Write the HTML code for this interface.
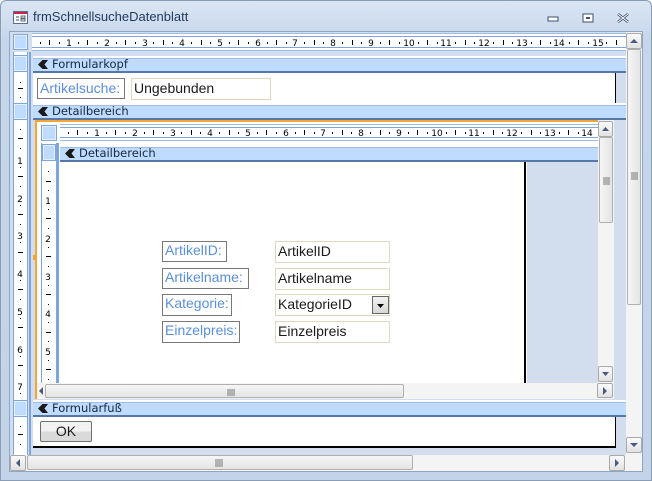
<!DOCTYPE html>
<html><head><meta charset="utf-8"><style>
*{margin:0;padding:0;box-sizing:border-box}
body{width:652px;height:481px;overflow:hidden;background:#fff;font-family:"Liberation Sans","DejaVu Sans",sans-serif;position:relative}
div,span{position:absolute}
.frame{left:0;top:0;width:652px;height:481px;background:linear-gradient(#dbe6f4,#c5d6ea 40px,#c3d4e8);border:1px solid #8a9db5;border-radius:6px 6px 0 0}
.title{left:33px;top:9px;color:#1e395b;font-family:"Liberation Sans",sans-serif;font-size:13px}
.client{left:9px;top:31px;width:634px;height:441px;background:#d2deed;border:1px solid #8fa5c0}
.ruler{background:#fff;border-top:1px solid #9dbce6;border-bottom:1px solid #9dbce6;box-shadow:inset 0 2px 0 #fff,inset 0 3px 0 #7ea6dc,inset 0 -2px 0 #fff,inset 0 -3px 0 #7ea6dc}
.vr{background:#fff;border-left:1px solid #7ea6dc;border-right:1px solid #7ea6dc}
.box{background:#bfdbff;border:1px solid #7ea6dc;box-shadow:inset 0 0 0 1px #e4f0ff}
.bar{background:#bfdbff;border-top:2px solid #fff;border-bottom:2px solid #5777a6;font-size:11.5px;font-family:"DejaVu Sans",sans-serif;color:#15283f;padding-left:19px;line-height:13px;box-shadow:inset 0 1px 0 #9dbce6}
.bar:before{content:"";position:absolute;left:5px;top:2px;width:10px;height:9px;background:#1a1a1a;clip-path:polygon(0 50%,45% 0,100% 0,65% 50%,100% 100%,45% 100%)}
.lbl{border:1px solid #777;color:#5b8fd8;font-size:14px;padding-left:2px;line-height:17px;background:#fff}
.tb{border:1px solid #ddd8c0;color:#1a1a1a;font-size:14px;padding-left:2px;line-height:19px;background:#fff}
.sb{background:#f4f4f4}
.arr{background:linear-gradient(#fafafa,#e2e2e2);border:1px solid #a9a9a9;border-radius:2px}
.thumb{background:linear-gradient(90deg,#f6f6f6,#e4e4e4);border:1px solid #b0b0b0;border-radius:2px}
.hthumb{background:linear-gradient(#f6f6f6,#e4e4e4);border:1px solid #b0b0b0;border-radius:2px}
</style></head><body>
<div class="frame"></div>
<svg style="position:absolute;left:13px;top:11px" width="15" height="13"><rect x="0.5" y="0.5" width="14" height="12" fill="#fff" stroke="#5a6f8f"/><rect x="1" y="1" width="13" height="2" fill="#c24"/><line x1="3" y1="6" x2="6" y2="6" stroke="#345"/><line x1="3" y1="9" x2="6" y2="9" stroke="#345"/><rect x="8" y="5" width="4" height="2" fill="none" stroke="#345" stroke-width=".8"/><rect x="8" y="8" width="4" height="2" fill="none" stroke="#345" stroke-width=".8"/></svg>
<span class="title">frmSchnellsucheDatenblatt</span>
<svg style="position:absolute;left:545px;top:12px" width="90" height="12"><rect x="3" y="5" width="10" height="4" fill="#fff" stroke="#3b4f6b"/><rect x="38" y="2" width="10" height="8" fill="#fff" stroke="#3b4f6b"/><rect x="41" y="5" width="4" height="2" fill="#3b4f6b"/><path d="M73 2l10 8M83 2l-10 8" stroke="#3b4f6b" stroke-width="2.5"/><path d="M73 2l10 8M83 2l-10 8" stroke="#fff" stroke-width="1"/></svg>
<div class="client"></div>
<div class="box" style="left:13px;top:34px;width:15px;height:16px"></div>
<div class="ruler" style="left:32px;top:33px;width:594px;height:18px"></div>
<svg style="position:absolute;left:32px;top:33px" width="594" height="18">
<g fill="#000">
<path d="M8 9h1v2h-1zM17 7h1v5h-1zM27 9h1v2h-1zM46 9h1v2h-1zM55 7h1v5h-1zM65 9h1v2h-1zM84 9h1v2h-1zM93 7h1v5h-1zM103 9h1v2h-1zM121 9h1v2h-1zM131 7h1v5h-1zM140 9h1v2h-1zM159 9h1v2h-1zM169 7h1v5h-1zM178 9h1v2h-1zM197 9h1v2h-1zM206 7h1v5h-1zM216 9h1v2h-1zM235 9h1v2h-1zM244 7h1v5h-1zM254 9h1v2h-1zM272 9h1v2h-1zM282 7h1v5h-1zM291 9h1v2h-1zM310 9h1v2h-1zM320 7h1v5h-1zM329 9h1v2h-1zM348 9h1v2h-1zM357 7h1v5h-1zM367 9h1v2h-1zM386 9h1v2h-1zM395 7h1v5h-1zM405 9h1v2h-1zM423 9h1v2h-1zM433 7h1v5h-1zM442 9h1v2h-1zM461 9h1v2h-1zM471 7h1v5h-1zM480 9h1v2h-1zM499 9h1v2h-1zM508 7h1v5h-1zM518 9h1v2h-1zM537 9h1v2h-1zM546 7h1v5h-1zM556 9h1v2h-1zM574 9h1v2h-1zM584 7h1v5h-1z"/>
</g>
<g font-size="9" font-family="DejaVu Sans" text-anchor="middle">
<text x="37" y="13">1</text><text x="75" y="13">2</text><text x="113" y="13">3</text><text x="150" y="13">4</text><text x="188" y="13">5</text><text x="226" y="13">6</text><text x="263" y="13">7</text><text x="301" y="13">8</text><text x="339" y="13">9</text><text x="377" y="13">10</text><text x="414" y="13">11</text><text x="452" y="13">12</text><text x="490" y="13">13</text><text x="527" y="13">14</text><text x="566" y="13">15</text>
</g></svg>
<div class="vr" style="left:13px;top:52px;width:15px;height:403px;background:#fff"></div>
<div style="left:29px;top:52px;width:2px;height:403px;background:#7ea6dc"></div>
<div class="box" style="left:13px;top:55px;width:15px;height:17px"></div>
<div class="box" style="left:13px;top:103px;width:15px;height:17px"></div>
<div class="box" style="left:13px;top:400px;width:15px;height:17px"></div>
<svg style="position:absolute;left:13px;top:52px" width="15" height="403">
<g fill="#000"><path d="M7 30h1v1h-1zM5 36h5v1h-5zM7 45h1v1h-1z"/>
<path d="M7 77h1v1h-1zM5 86h5v1h-5zM7 96h1v1h-1zM7 115h1v1h-1zM5 124h5v1h-5zM7 134h1v1h-1zM7 153h1v1h-1zM5 162h5v1h-5zM7 172h1v1h-1zM7 190h1v1h-1zM5 200h5v1h-5zM7 209h1v1h-1zM7 228h1v1h-1zM5 237h5v1h-5zM7 247h1v1h-1zM7 266h1v1h-1zM5 275h5v1h-5zM7 285h1v1h-1zM7 304h1v1h-1zM5 313h5v1h-5zM7 323h1v1h-1zM7 341h1v1h-1z"/>
<path d="M7 374h1v1h-1zM5 382h5v1h-5zM7 392h1v1h-1z"/></g>
<g font-size="9" font-family="DejaVu Sans" text-anchor="middle"><text x="7" y="112">1</text><text x="7" y="150">2</text><text x="7" y="187">3</text><text x="7" y="225">4</text><text x="7" y="263">5</text><text x="7" y="301">6</text><text x="7" y="338">7</text></g></svg>
<div class="bar" style="left:33px;top:56px;width:593px;height:17px">Formularkopf</div>
<div style="left:33px;top:73px;width:583px;height:30px;background:#fff;border-right:1px solid #000"></div>
<div class="lbl" style="left:37px;top:78px;width:88px;height:21px;line-height:19px">Artikelsuche:</div>
<div class="tb" style="left:131px;top:78px;width:140px;height:22px">Ungebunden</div>
<div class="bar" style="left:33px;top:103px;width:593px;height:17px">Detailbereich</div>
<div style="left:33px;top:120px;width:593px;height:280px;background:#d2deed"></div>
<div style="left:35px;top:120px;width:2px;height:279px;background:#f7a530"></div>
<div style="left:33px;top:255px;width:3px;height:5px;background:#f7a530"></div>
<div style="left:35px;top:120px;width:578px;height:2px;background:#f7a530"></div>
<div style="left:37px;top:122px;width:561px;height:262px;background:#fff"></div>
<div class="box" style="left:41px;top:125px;width:16px;height:16px"></div>
<div class="ruler" style="left:60px;top:124px;width:538px;height:17px"></div>
<svg style="position:absolute;left:60px;top:124px" width="538" height="17">
<g fill="#000"><path d="M8 8h1v2h-1zM17 6h1v5h-1zM27 8h1v2h-1zM46 8h1v2h-1zM55 6h1v5h-1zM65 8h1v2h-1zM84 8h1v2h-1zM93 6h1v5h-1zM103 8h1v2h-1zM121 8h1v2h-1zM131 6h1v5h-1zM140 8h1v2h-1zM159 8h1v2h-1zM169 6h1v5h-1zM178 8h1v2h-1zM197 8h1v2h-1zM206 6h1v5h-1zM216 8h1v2h-1zM235 8h1v2h-1zM244 6h1v5h-1zM254 8h1v2h-1zM272 8h1v2h-1zM282 6h1v5h-1zM291 8h1v2h-1zM310 8h1v2h-1zM320 6h1v5h-1zM329 8h1v2h-1zM348 8h1v2h-1zM357 6h1v5h-1zM367 8h1v2h-1zM386 8h1v2h-1zM395 6h1v5h-1zM405 8h1v2h-1zM423 8h1v2h-1zM433 6h1v5h-1zM442 8h1v2h-1zM461 8h1v2h-1zM471 6h1v5h-1zM480 8h1v2h-1zM499 8h1v2h-1zM508 6h1v5h-1zM518 8h1v2h-1z"/></g>
<g font-size="9" font-family="DejaVu Sans" text-anchor="middle"><text x="37" y="12">1</text><text x="75" y="12">2</text><text x="113" y="12">3</text><text x="150" y="12">4</text><text x="188" y="12">5</text><text x="226" y="12">6</text><text x="263" y="12">7</text><text x="301" y="12">8</text><text x="339" y="12">9</text><text x="377" y="12">10</text><text x="414" y="12">11</text><text x="452" y="12">12</text><text x="490" y="12">13</text><text x="527" y="12">14</text></g></svg>
<div class="vr" style="left:41px;top:143px;width:16px;height:240px"></div>
<div style="left:57px;top:143px;width:2px;height:240px;background:#7ea6dc"></div>
<div class="box" style="left:42px;top:144px;width:14px;height:17px"></div>
<svg style="position:absolute;left:41px;top:162px" width="16" height="221">
<g fill="#000"><path d="M7 9h1v1h-1zM5 19h5v1h-5zM7 28h1v1h-1zM7 47h1v1h-1zM5 56h5v1h-5zM7 66h1v1h-1zM7 85h1v1h-1zM5 94h5v1h-5zM7 104h1v1h-1zM7 123h1v1h-1zM5 132h5v1h-5zM7 142h1v1h-1zM7 160h1v1h-1zM5 170h5v1h-5zM7 179h1v1h-1zM7 198h1v1h-1zM5 207h5v1h-5zM7 217h1v1h-1z"/></g>
<g font-size="9" font-family="DejaVu Sans" text-anchor="middle"><text x="7" y="42">1</text><text x="7" y="80">2</text><text x="7" y="118">3</text><text x="7" y="155">4</text><text x="7" y="193">5</text></g></svg>
<div class="bar" style="left:60px;top:145px;width:538px;height:17px">Detailbereich</div>
<div style="left:60px;top:162px;width:466px;height:221px;background:#fff;border-right:2px solid #000"></div>
<div style="left:527px;top:162px;width:71px;height:221px;background:#d2deed"></div>
<div class="lbl" style="left:162px;top:241px;width:65px;height:21px">ArtikelID:</div>
<div class="tb" style="left:275px;top:241px;width:115px;height:22px">ArtikelID</div>
<div class="lbl" style="left:162px;top:268px;width:87px;height:21px">Artikelname:</div>
<div class="tb" style="left:275px;top:268px;width:115px;height:22px">Artikelname</div>
<div class="lbl" style="left:162px;top:294px;width:70px;height:22px">Kategorie:</div>
<div class="tb" style="left:275px;top:294px;width:115px;height:22px">KategorieID</div>
<div style="left:372px;top:296px;width:17px;height:18px;border:1px solid #666;background:linear-gradient(#f2f2f2,#d8d8d8)"><svg width="15" height="16"><path d="M4 7h7l-3.5 4z" fill="#000"/></svg></div>
<div class="lbl" style="left:162px;top:321px;width:78px;height:22px">Einzelpreis:</div>
<div class="tb" style="left:275px;top:321px;width:115px;height:22px">Einzelpreis</div>
<div class="sb" style="left:598px;top:120px;width:16px;height:263px"></div>
<div class="arr" style="left:598px;top:121px;width:15px;height:16px"><svg width="13" height="14"><path d="M3 9h7l-3.5-4z" fill="#4a5a80"/></svg></div>
<div class="thumb" style="left:599px;top:137px;width:14px;height:86px"><svg width="12" height="84"><path d="M3 40h7M3 42h7M3 44h7M3 46h7" stroke="#777"/></svg></div>
<div class="arr" style="left:598px;top:366px;width:15px;height:16px"><svg width="13" height="14"><path d="M3 5h7l-3.5 4z" fill="#4a5a80"/></svg></div>
<div class="sb" style="left:37px;top:383px;width:577px;height:16px"></div>
<div style="left:37px;top:384px;width:8px;height:14px"><svg width="8" height="14"><path d="M6 3v8l-4-4z" fill="#4a5a80"/></svg></div>
<div class="hthumb" style="left:45px;top:384px;width:359px;height:14px"><svg width="357" height="12"><path d="M182 3v7M184 3v7M186 3v7M188 3v7" stroke="#777"/></svg></div>
<div class="arr" style="left:597px;top:383px;width:16px;height:15px"><svg width="14" height="13"><path d="M5 3v8l4-4z" fill="#4a5a80"/></svg></div>
<div class="bar" style="left:33px;top:400px;width:593px;height:17px">Formularfuß</div>
<div style="left:33px;top:417px;width:583px;height:31px;background:#fff;border-right:1px solid #000;border-bottom:2px solid #000"></div>
<div style="left:40px;top:421px;width:52px;height:21px;border:1px solid #707070;border-radius:2px;background:linear-gradient(#f2f2f2 50%,#dadada 51%);font-size:14px;text-align:center;line-height:19px;color:#1a1a1a">OK</div>
<div class="sb" style="left:626px;top:32px;width:16px;height:423px"></div>
<div class="arr" style="left:626px;top:33px;width:16px;height:16px"><svg width="14" height="14"><path d="M3 9h8l-4-4z" fill="#4a5a80"/></svg></div>
<div class="thumb" style="left:627px;top:49px;width:14px;height:256px"><svg width="12" height="254"><path d="M3 123h7M3 125h7M3 127h7M3 129h7" stroke="#777"/></svg></div>
<div class="arr" style="left:626px;top:437px;width:16px;height:16px"><svg width="14" height="14"><path d="M3 5h8l-4 4z" fill="#4a5a80"/></svg></div>
<div class="sb" style="left:10px;top:455px;width:632px;height:16px"></div>
<div class="arr" style="left:10px;top:455px;width:16px;height:16px"><svg width="14" height="14"><path d="M9 3v8l-4-4z" fill="#4a5a80"/></svg></div>
<div class="hthumb" style="left:27px;top:455px;width:386px;height:15px"><svg width="384" height="13"><path d="M188 3v8M190 3v8M192 3v8M194 3v8" stroke="#777"/></svg></div>
<div class="arr" style="left:609px;top:455px;width:16px;height:16px"><svg width="14" height="14"><path d="M5 3v8l4-4z" fill="#4a5a80"/></svg></div>
</body></html>
